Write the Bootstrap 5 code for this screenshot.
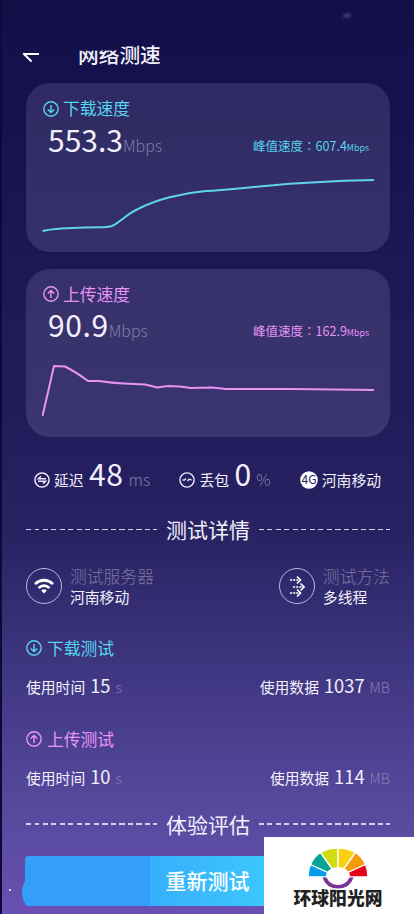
<!DOCTYPE html>
<html lang="zh-CN">
<head>
<meta charset="utf-8">
<meta name="viewport" content="width=device-width, initial-scale=1">
<title>网络测速</title>
<link rel="stylesheet" href="https://cdn.jsdelivr.net/npm/bootstrap@5.3.0/dist/css/bootstrap.min.css">
<style>
:root{--cyan:#56d5ee;--pink:#e894f6}
body{font-family:"Noto Sans CJK SC",sans-serif;background:#130f4a;line-height:1;color:#f2f0fc}
.screen{width:414px;height:914px;border-left:2px solid #0b0a38;padding:0 24px;
 background:linear-gradient(#130f49 0,#15114c 90px,#1d1855 260px,#221c5b 420px,#292364 540px,#372f75 620px,#443a88 700px,#54479a 790px,#5f4da6 860px,#6a50b3 914px)}
.topbar{height:83px;padding:44px 0 0 0}
.back-arrow{margin-left:-4px;margin-top:6px}
.page-title{font-size:20.7px;font-weight:500;margin-left:38px;clip-path:polygon(0 33%,50% 31%,52% 15%,75% 0,100% 0,100% 110%,0 110%)}
.smudge{left:341px;top:13px;width:8px;height:5px;border-radius:50%;background:#6964a0;opacity:.45;filter:blur(1px);transform:rotate(-15deg)}
.speed-card{height:168.5px;border:0;border-radius:24px;background:rgba(222,217,255,.13);color:inherit;margin-bottom:17px;padding:17px 16px 0}
.cyan{color:var(--cyan)}.pink{color:var(--pink)}
.heading-s{font-size:16.8px;height:17px;gap:5px}
.speed-card .heading-s{margin-left:1px;gap:4px}
.speed-row{height:30px;margin-top:6.5px;padding:0 5px 0 6px}
.num-xl{font-size:30px}
.unit{color:#827fa4;font-weight:300}
.wide-num{letter-spacing:.6px}
.peak{font-size:12.5px;position:relative;top:-1px}
.peak em{font-style:normal;font-family:"Noto Sans CJK TC",sans-serif}
.peak small{font-size:8.8px}
.plot{display:block;margin-top:10.5px}
.stats{height:30px;margin-top:21px;padding:0 9px 0 8px}
.stats svg{position:relative;top:6.5px}
.stats .carrier svg{top:-2px}
.stats .num-xl{margin-left:5.5px}
.stats .unit{margin-left:5px}
.stat-label{font-size:14.8px}
.divider{height:21px;gap:9px}
.divider i{flex:1;height:1.6px;background:repeating-linear-gradient(90deg,#d3cdee 0 5px,transparent 5px 8.5px)}
.divider span{font-size:21px}
.first-divider{margin-top:31px}
.last-divider{margin-top:27px}
.meta{margin-top:28px}
.ring{width:36px;height:36px;border:1px solid #bdb8df;border-radius:50%}
.info{gap:8px}
.info-k{font-size:16.8px;color:#7e77a0;font-weight:300}
.info-v{font-size:14.8px;margin-top:5px}
.test-title{margin-top:35px}
.usage{height:20px;margin-top:19px;margin-bottom:35px}
.usage b{font-size:18.3px;font-weight:400;margin:0 5px}
.usage .unit{font-size:14.3px;color:#877bb1}
.retry{height:50px;margin:21px 0 0 -1px;border:0;border-radius:4px;color:#fff;font-size:21px;font-weight:500;width:365px;padding:0;background:linear-gradient(90deg,#349ffb 0 125px,#37affb 125px,#3cc7fc 240px,#3ecbfc)}
.retry-edge{left:20px;top:880px;width:12px;height:25px;border-radius:50%;background:#369ffa}
.speck{left:7px;top:889px;width:1.5px;height:1.5px;background:#d8cff5}
.brand{width:150px;height:77px;background:#fff;color:#222}
.brand svg{margin-top:11px;margin-left:-2px}
.brand-name{font-size:17.8px;font-weight:900;margin-top:-1px;margin-left:-2px}
</style>
<script src="https://cdn.jsdelivr.net/npm/bootstrap@5.3.0/dist/js/bootstrap.bundle.min.js"></script>
</head>
<body class="m-0 overflow-hidden">
<svg width="0" height="0" class="position-absolute">
 <defs>
  <g id="down" fill="none" stroke="currentColor" stroke-width="1.4"><circle cx="8" cy="8" r="7.2"/><path d="M8 4v7.5M4.8 8.4 8 11.6l3.2-3.2"/></g>
  <g id="up" fill="none" stroke="currentColor" stroke-width="1.4"><circle cx="8" cy="8" r="7.2"/><path d="M8 12V4.6M4.8 7.6 8 4.4l3.2 3.2"/></g>
 </defs>
</svg>
<main class="screen position-relative">
 <div class="smudge position-absolute"></div>
 <header class="topbar d-flex align-items-start">
  <svg class="back-arrow" width="18" height="14" fill="none" stroke="#fff" stroke-width="2"><path d="M17 4H2M1.200 3.200 9.600 11.600"/></svg>
  <h1 class="page-title mb-0 lh-1">网络测速</h1>
 </header>

 <section class="card speed-card">
  <div class="heading-s d-flex align-items-center cyan"><svg width="16" height="16"><use href="#down"/></svg><span>下载速度</span></div>
  <div class="speed-row d-flex align-items-baseline">
   <span class="num-xl">553.3</span><span class="unit">Mbps</span>
   <span class="peak cyan ms-auto">峰值速度<em lang="zh-TW">：</em>607.4<small>Mbps</small></span>
  </div>
  <svg class="plot" width="332" height="74" fill="none" stroke="#5fd3ee" stroke-width="2"><path d="M.5 67C12 64 28 64 43 63.500C60 63 65 64 70 62C80 57 84 50 98 44C114 36 139 29 164 27C184 26 199 24 223 22C254 19 286 17 332 16"/></svg>
 </section>

 <section class="card speed-card">
  <div class="heading-s d-flex align-items-center pink"><svg width="16" height="16"><use href="#up"/></svg><span>上传速度</span></div>
  <div class="speed-row d-flex align-items-baseline">
   <span class="num-xl wide-num">90.9</span><span class="unit">Mbps</span>
   <span class="peak pink ms-auto">峰值速度<em lang="zh-TW">：</em>162.9<small>Mbps</small></span>
  </div>
  <svg class="plot" width="332" height="74" fill="none" stroke="#e793f3" stroke-width="2" stroke-linejoin="round"><path d="M.5 66 12 16 23 16.500Q34 22 46 31L57 31Q70 33 82 33.500L103 34.500Q110 36 115 37.500L126 36L138 36.500L149 38L170 37.500L184 39L250 39L332 40"/></svg>
 </section>

 <section class="stats d-flex align-items-baseline justify-content-between">
  <div class="d-flex align-items-baseline">
   <svg class="align-self-center" width="16" height="16" fill="none" stroke="#eeeafa" stroke-width="1.500"><circle cx="8" cy="8" r="7.100"/><path d="M12 6.800H4.400L7 4.300M4 9.200H11.600L9 11.700"/></svg>
   <span class="stat-label ms-1">延迟</span><span class="num-xl wide-num">48</span><span class="unit">ms</span>
  </div>
  <div class="d-flex align-items-baseline">
   <svg class="align-self-center" width="16" height="16" fill="none" stroke="#eeeafa" stroke-width="1.400"><circle cx="8" cy="8" r="7.100"/><path d="M3.500 8H5.500L7 6.600M8.500 9.200 10 7.200 12.500 8"/></svg>
   <span class="stat-label ms-1">丢包</span><span class="num-xl">0</span><span class="unit">%</span>
  </div>
  <div class="carrier d-flex align-items-baseline">
   <svg class="align-self-center" width="18" height="18"><circle cx="9" cy="9" r="8.800" fill="#fff"/><text x="9" y="13.300" text-anchor="middle" font-size="12" fill="#29225f">4G</text></svg>
   <span class="stat-label ms-1">河南移动</span>
  </div>
 </section>

 <div class="divider first-divider d-flex align-items-center"><i></i><span>测试详情</span><i></i></div>

 <section class="meta d-flex justify-content-between">
  <div class="info d-flex align-items-center">
   <div class="ring d-flex align-items-center justify-content-center"><svg width="20" height="16" fill="none" stroke="#fff" stroke-width="2.800"><path d="M1 6Q10-1.500 19 6M4.500 10Q10 5.200 15.500 10"/><path d="M7.200 12.500Q10 10.200 12.800 12.500L10 15.500Z" fill="#fff" stroke="none"/></svg></div>
   <div><div class="info-k">测试服务器</div><div class="info-v">河南移动</div></div>
  </div>
  <div class="info d-flex align-items-center">
   <div class="ring d-flex align-items-center justify-content-center"><svg width="16" height="22" fill="none" stroke="#fff" stroke-width="1.600"><path d="M1 5H11M4 12H15M1 18H11" stroke-dasharray="2.200 .9"/><path d="M8 1.500 11.500 5 8 8.500M11.500 8.500 15 12 11.500 15.500M8 14.500 11.500 18 8 21.500"/></svg></div>
   <div><div class="info-k">测试方法</div><div class="info-v">多线程</div></div>
  </div>
 </section>

 <div class="test-title heading-s d-flex align-items-center cyan"><svg width="16" height="16"><use href="#down"/></svg><span>下载测试</span></div>
 <div class="usage d-flex justify-content-between">
  <div class="d-flex align-items-baseline"><span class="stat-label">使用时间</span><b>15</b><span class="unit">s</span></div>
  <div class="d-flex align-items-baseline"><span class="stat-label">使用数据</span><b>1037</b><span class="unit">MB</span></div>
 </div>
 <div class="heading-s d-flex align-items-center pink"><svg width="16" height="16"><use href="#up"/></svg><span>上传测试</span></div>
 <div class="usage d-flex justify-content-between mb-0">
  <div class="d-flex align-items-baseline"><span class="stat-label">使用时间</span><b>10</b><span class="unit">s</span></div>
  <div class="d-flex align-items-baseline"><span class="stat-label">使用数据</span><b>114</b><span class="unit">MB</span></div>
 </div>

 <div class="divider last-divider d-flex align-items-center"><i></i><span>体验评估</span><i></i></div>
 <div class="retry-edge position-absolute"></div><div class="speck position-absolute"></div>
 <button class="btn retry d-flex align-items-center justify-content-center position-relative" type="button">重新测试</button>

 <aside class="brand position-absolute bottom-0 end-0 d-flex flex-column align-items-center">
  <svg width="62" height="42" viewBox="0 0 62 42">
   <g stroke="#fff" stroke-width="1.300">
    <path fill="#079ce6" d="M31 29H1Q1 22 3.500 16.500Z"/>
    <path fill="#0aa497" d="M31 29 3.500 16.500Q7 8.500 13.500 4.500Z"/>
    <path fill="#cfdc12" d="M31 29 13.500 4.500Q21 0 31 0Z"/>
    <path fill="#fbd011" d="M31 29V0Q41 0 48.500 4.500Z"/>
    <path fill="#f59a0c" d="M31 29 48.500 4.500Q55 8.500 58.500 16.500Z"/>
    <path fill="#e50516" d="M31 29 58.500 16.500Q61 22 61 29Z"/>
   </g>
   <ellipse cx="31" cy="28" rx="12" ry="9" fill="#fff"/>
   <path fill="#773394" d="M15.500 29.500H19.500Q23 37 31 37T42.500 29.500H46.500Q43 40.500 31 40.500T15.500 29.500Z"/>
  </svg>
  <div class="brand-name">环球阳光网</div>
 </aside>
</main>
</body>
</html>
